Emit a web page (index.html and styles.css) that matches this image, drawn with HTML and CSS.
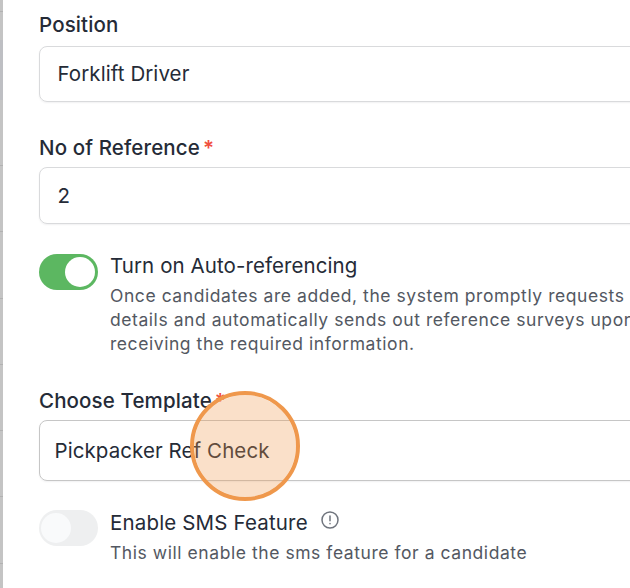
FILE: index.html
```
<!DOCTYPE html>
<html lang="en">
<head>
  <meta charset="UTF-8"/>
  <meta name="viewport" content="width=device-width, initial-scale=1.0"/>
  <title>Reference Check</title>
  <link rel="stylesheet" href="styles.css">
</head>
<body>
<div class="page">
  <!-- edge of the dimmed table behind the drawer -->
  <div class="backdrop">
    <div class="backdrop-row first"></div>
    <div class="backdrop-row tall"></div>
    <div class="backdrop-row"></div>
    <div class="backdrop-row"></div>
    <div class="backdrop-row"></div>
    <div class="backdrop-row"></div>
    <div class="backdrop-row"></div>
    <div class="backdrop-row"></div>
    <div class="backdrop-row"></div>
  </div>

  <main class="drawer">
    <div class="form-group">
      <div class="label">Position</div>
      <div class="field">Forklift Driver</div>
    </div>

    <div class="form-group count-group">
      <div class="label">No of Reference<span class="required">*</span></div>
      <div class="field count-field">2</div>
    </div>

    <div class="toggle-row auto-row">
      <div class="toggle on"><div class="knob"></div></div>
      <div class="toggle-text">
        <div class="toggle-title">Turn on Auto-referencing</div>
        <div class="toggle-desc">Once candidates are added, the system promptly requests<br>details and automatically sends out reference surveys upon<br>receiving the required information.</div>
      </div>
    </div>

    <div class="form-group template-group">
      <div class="label">Choose Template<span class="required">*</span></div>
      <div class="field select-field">Pickpacker Ref Check
        <div class="click-marker"></div>
      </div>
    </div>

    <div class="toggle-row sms-row">
      <div class="toggle"><div class="knob"></div></div>
      <div class="toggle-text">
        <div class="toggle-title">Enable SMS Feature
          <svg class="info-icon" width="18" height="18" viewBox="0 0 18 18" fill="none" stroke="#6f747d" stroke-width="1.5" stroke-linecap="round">
            <circle cx="9" cy="9" r="8"/>
            <path d="M9 5v4.7M9 12.6v.2"/>
          </svg>
        </div>
        <div class="toggle-desc">This will enable the sms feature for a candidate</div>
      </div>
    </div>
  </main>
</div>
</body>
</html>
```
FILE: styles.css
```
body {
  margin: 0;
  font-family: Inter, sans-serif;
  background-color: #fff;
  color: #252b37;
  overflow: hidden;
}
.page {
  display: flex;
  height: 588px;
  overflow: hidden;
}
.backdrop {
  flex: 0 0 3px;
  background-color: #c4c4c4;
}
.backdrop-row {
  height: 66.3px;
  box-sizing: border-box;
  border-bottom: 1px solid #b2b2b2;
}
.backdrop-row.first {
  height: 12px;
}
.backdrop-row.tall {
  height: 154px;
  background: linear-gradient(#c4c4c4 28px, #bebfc3 28px, #bebfc3 88px, #c4c4c4 88px);
}
.drawer {
  flex: 0 0 660px;
  box-sizing: border-box;
  padding: 13px 0 0 36px;
}
.label {
  display: flex;
  font-size: 20.5px;
  font-weight: 500;
  line-height: 24px;
  white-space: nowrap;
  letter-spacing: 0.12px;
}
.required {
  margin-left: 3px;
  font-weight: 600;
  color: #f04f3e;
}
.field {
  display: flex;
  align-items: center;
  height: 56px;
  margin-top: 9px;
  padding: 0 0 2px 17.5px;
  box-sizing: border-box;
  border: 1px solid #d9dadc;
  border-radius: 8px;
  box-shadow: 0 1px 2px rgba(16,24,40,0.06);
  font-size: 20.5px;
  letter-spacing: 0.08px;
  white-space: nowrap;
}
.count-group {
  margin-top: 34px;
}
.count-field {
  height: 57px;
  margin-top: 7px;
  padding-bottom: 1px;
}
.toggle-row {
  display: flex;
  gap: 12px;
}
.auto-row {
  margin-top: 30px;
}
.toggle {
  flex: 0 0 59px;
  display: flex;
  height: 36px;
  padding: 3px 2px;
  box-sizing: border-box;
  border-radius: 18px;
  background-color: #eeeff0;
}
.toggle.on {
  justify-content: flex-end;
  padding-right: 3px;
  background-color: #5cb761;
}
.knob {
  width: 30px;
  height: 30px;
  border-radius: 50%;
  background-color: #f9fafb;
}
.toggle.on .knob {
  background-color: #fff;
}
.toggle-title {
  display: flex;
  font-size: 20.5px;
  line-height: 24px;
  letter-spacing: 0.08px;
  white-space: nowrap;
}
.toggle-desc {
  margin-top: 6px;
  font-size: 17.5px;
  line-height: 24px;
  letter-spacing: 0.56px;
  white-space: nowrap;
  color: #535862;
}
.template-group {
  margin-top: 33px;
}
.select-field {
  position: relative;
  height: 61px;
  margin-top: 7px;
  padding: 0 0 0 14.5px;
  border-color: #c6c6c6;
}
/* highlight ring over the clicked option */
.click-marker {
  position: absolute;
  left: 150px;
  top: -30px;
  width: 110px;
  height: 110px;
  box-sizing: border-box;
  border: 4px solid #ef984c;
  border-radius: 50%;
  background-color: rgba(239,152,76,0.3);
  background-clip: padding-box;
}
.sms-row {
  margin-top: 29px;
}
.sms-row .toggle-text {
  padding-top: 1px;
}
.sms-row .toggle-title {
  letter-spacing: 0.16px;
}
.info-icon {
  margin-left: 13px;
}
```
